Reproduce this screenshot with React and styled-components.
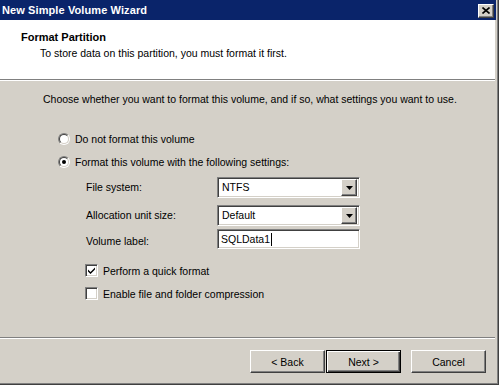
import React from "react";
import styled, { createGlobalStyle, css } from "styled-components";

const GlobalStyle = createGlobalStyle`
  html, body {
    margin: 0;
    padding: 0;
    background: #d4d0c8;
  }
  body {
    font-family: "Liberation Sans", Arial, sans-serif;
    font-size: 10.5px;
    color: #000;
  }
`;

const sunken = css`
  border: 1px solid;
  border-color: #808080 #ffffff #ffffff #808080;
  box-shadow: inset 1px 1px #404040, inset -1px -1px #d4d0c8;
`;

const raised = css`
  border: 1px solid;
  border-color: #ffffff #404040 #404040 #ffffff;
  box-shadow: inset -1px -1px #808080;
`;

const Window = styled.div`
  width: 499px;
  height: 385px;
  box-sizing: border-box;
  padding-right: 4px;
  background: #d4d0c8;
  box-shadow: inset -1px -1px #404040, inset -2px -2px #808080;
  display: flex;
  flex-direction: column;
`;

const TitleBar = styled.div`
  height: 20px;
  background: #0a246a;
  display: flex;
  align-items: center;
  justify-content: space-between;
  padding: 0 2px 0 2px;
  margin-right: -1px;
`;

const TitleText = styled.span`
  color: #fff;
  font-weight: bold;
  font-size: 11px;
  letter-spacing: 0.1px;
`;

const CloseButton = styled.div`
  width: 16px;
  height: 14px;
  box-sizing: border-box;
  background: #d4d0c8;
  ${raised};
  display: flex;
  align-items: center;
  justify-content: center;
  margin-top: 1px;
`;

const Header = styled.div`
  height: 60px;
  box-sizing: border-box;
  background: #fff;
  padding: 11px 0 0 21px;
  border-bottom: 1px solid #808080;
  box-shadow: 0 1px #ffffff;
`;

const HeaderTitle = styled.div`
  font-weight: bold;
  font-size: 11px;
  line-height: 13px;
`;

const HeaderSub = styled.div`
  line-height: 13px;
  margin: 3px 0 0 19px;
`;

const Body = styled.div`
  flex: 1;
  margin-top: 1px;
  padding: 12px 0 0 43px;
  border-bottom: 1px solid #808080;
  box-shadow: 0 1px #ffffff;
`;

const Intro = styled.div`
  line-height: 13px;
`;

const Options = styled.div`
  margin: 26px 0 0 15px;
  display: flex;
  flex-direction: column;
  gap: 10px;
`;

const OptionRow = styled.label`
  display: flex;
  align-items: center;
  height: 13px;
  gap: ${(p) => p.$gap}px;
`;

const Radio = styled.span`
  position: relative;
  width: 12px;
  height: 12px;
  box-sizing: border-box;
  border-radius: 50%;
  border: 1px solid;
  border-color: #808080 #ffffff #ffffff #808080;
  &::before {
    content: "";
    position: absolute;
    inset: 0;
    border-radius: 50%;
    border: 1px solid;
    border-color: #404040 #d4d0c8 #d4d0c8 #404040;
    background: #fff;
  }
  &::after {
    content: "";
    display: ${(p) => (p.$checked ? "block" : "none")};
    position: absolute;
    left: 3px;
    top: 3px;
    width: 4px;
    height: 4px;
    border-radius: 50%;
    background: #000;
  }
`;

const Settings = styled.div`
  display: grid;
  grid-template-columns: 131px 143px;
  row-gap: 7px;
  margin: -1px 0 0 28px;
  align-items: center;
`;

const FieldLabel = styled.span`
  line-height: 13px;
`;

const Combo = styled.div`
  height: 21px;
  box-sizing: border-box;
  ${sunken};
  background: #fff;
  display: flex;
  align-items: center;
  padding: 2px;
`;

const ComboValue = styled.span`
  flex: 1;
  padding-left: 2px;
  line-height: 13px;
`;

const ComboButton = styled.span`
  width: 16px;
  height: 17px;
  box-sizing: border-box;
  background: #d4d0c8;
  ${raised};
  display: flex;
  align-items: center;
  justify-content: center;
`;

const TextBox = styled.div`
  height: 20px;
  box-sizing: border-box;
  ${sunken};
  background: #fff;
  display: flex;
  align-items: center;
  padding-left: 3px;
  margin-top: -4px;
`;

const Caret = styled.span`
  display: inline-block;
  width: 1px;
  height: 13px;
  background: #000;
  margin-left: 1px;
`;

const Checks = styled.div`
  margin: 5px 0 0 27px;
  display: flex;
  flex-direction: column;
  gap: 10px;
`;

const CheckBox = styled.span`
  width: 13px;
  height: 13px;
  box-sizing: border-box;
  ${sunken};
  background: #fff;
  display: flex;
  align-items: center;
  justify-content: center;
`;

const Footer = styled.div`
  height: 46px;
  margin-top: 1px;
  box-sizing: border-box;
  padding: 11px 9px 0 0;
  display: flex;
  justify-content: flex-end;
  align-items: flex-start;
`;

const Button = styled.div`
  width: 75px;
  height: 23px;
  box-sizing: border-box;
  background: #d4d0c8;
  display: flex;
  align-items: center;
  justify-content: center;
  margin-left: ${(p) => p.$gap || 0}px;
  ${(p) =>
    p.$default
      ? css`
          border: 1px solid #000;
          box-shadow: inset 1px 1px #fff, inset -1px -1px #404040,
            inset -2px -2px #808080;
        `
      : raised};
`;

function Triangle() {
  return (
    <svg width="7" height="4" viewBox="0 0 7 4">
      <path d="M0 0H7L3.5 4Z" fill="#000" />
    </svg>
  );
}

function CheckMark() {
  return (
    <svg width="9" height="9" viewBox="0 0 9 9">
      <path d="M1 3.5 L3.5 6 L8 1.5 V3.5 L3.5 8 L1 5.5 Z" fill="#000" />
    </svg>
  );
}

function CloseGlyph() {
  return (
    <svg width="8" height="7" viewBox="0 0 8 7">
      <path
        d="M0.5 0.5 L7.5 6.5 M7.5 0.5 L0.5 6.5"
        stroke="#000"
        strokeWidth="1.6"
      />
    </svg>
  );
}

export default function App() {
  return (
    <>
      <GlobalStyle />
      <Window>
        <TitleBar>
          <TitleText>New Simple Volume Wizard</TitleText>
          <CloseButton>
            <CloseGlyph />
          </CloseButton>
        </TitleBar>
        <Header>
          <HeaderTitle>Format Partition</HeaderTitle>
          <HeaderSub>
            To store data on this partition, you must format it first.
          </HeaderSub>
        </Header>
        <Body>
          <Intro>
            Choose whether you want to format this volume, and if so, what
            settings you want to use.
          </Intro>
          <Options>
            <OptionRow $gap={5}>
              <Radio />
              <span>Do not format this volume</span>
            </OptionRow>
            <OptionRow $gap={5}>
              <Radio $checked />
              <span>Format this volume with the following settings:</span>
            </OptionRow>
            <Settings>
              <FieldLabel>File system:</FieldLabel>
              <Combo>
                <ComboValue>NTFS</ComboValue>
                <ComboButton>
                  <Triangle />
                </ComboButton>
              </Combo>
              <FieldLabel>Allocation unit size:</FieldLabel>
              <Combo>
                <ComboValue>Default</ComboValue>
                <ComboButton>
                  <Triangle />
                </ComboButton>
              </Combo>
              <FieldLabel>Volume label:</FieldLabel>
              <TextBox>
                SQLData1
                <Caret />
              </TextBox>
            </Settings>
            <Checks>
              <OptionRow $gap={5}>
                <CheckBox>
                  <CheckMark />
                </CheckBox>
                <span>Perform a quick format</span>
              </OptionRow>
              <OptionRow $gap={5}>
                <CheckBox />
                <span>Enable file and folder compression</span>
              </OptionRow>
            </Checks>
          </Options>
        </Body>
        <Footer>
          <Button>&lt; Back</Button>
          <Button $default $gap={1}>
            Next &gt;
          </Button>
          <Button $gap={10}>Cancel</Button>
        </Footer>
      </Window>
    </>
  );
}
